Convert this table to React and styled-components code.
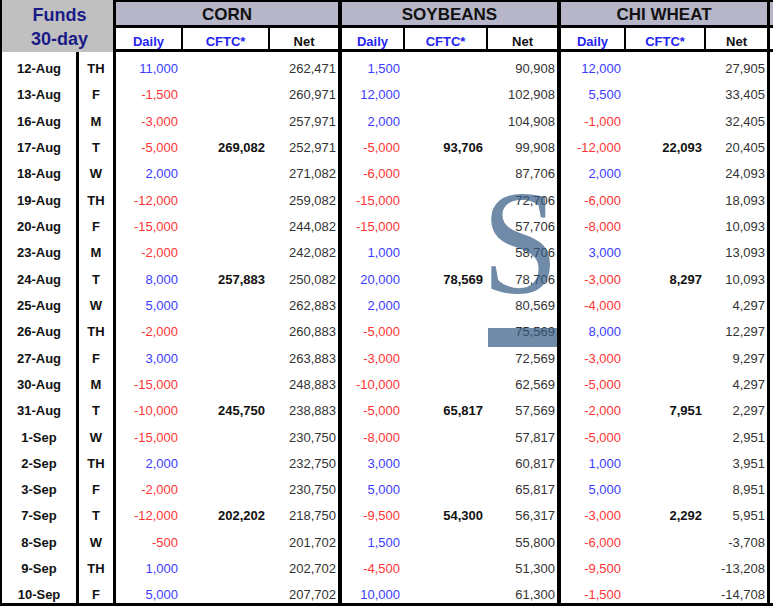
import React from "react";
import styled, { createGlobalStyle } from "styled-components";

const GlobalStyle = createGlobalStyle`
  html, body {
    margin: 0;
    padding: 0;
    background: #fff;
  }
  body {
    font-family: "Liberation Sans", Arial, sans-serif;
    overflow: hidden;
  }
`;

const ROW_H = 26.32;

// date, day, [daily, cftc, net] for corn / soybeans / chi wheat
const rows = [
  ["12-Aug", "TH", ["11,000", "", "262,471"], ["1,500", "", "90,908"], ["12,000", "", "27,905"]],
  ["13-Aug", "F", ["-1,500", "", "260,971"], ["12,000", "", "102,908"], ["5,500", "", "33,405"]],
  ["16-Aug", "M", ["-3,000", "", "257,971"], ["2,000", "", "104,908"], ["-1,000", "", "32,405"]],
  ["17-Aug", "T", ["-5,000", "269,082", "252,971"], ["-5,000", "93,706", "99,908"], ["-12,000", "22,093", "20,405"]],
  ["18-Aug", "W", ["2,000", "", "271,082"], ["-6,000", "", "87,706"], ["2,000", "", "24,093"]],
  ["19-Aug", "TH", ["-12,000", "", "259,082"], ["-15,000", "", "72,706"], ["-6,000", "", "18,093"]],
  ["20-Aug", "F", ["-15,000", "", "244,082"], ["-15,000", "", "57,706"], ["-8,000", "", "10,093"]],
  ["23-Aug", "M", ["-2,000", "", "242,082"], ["1,000", "", "58,706"], ["3,000", "", "13,093"]],
  ["24-Aug", "T", ["8,000", "257,883", "250,082"], ["20,000", "78,569", "78,706"], ["-3,000", "8,297", "10,093"]],
  ["25-Aug", "W", ["5,000", "", "262,883"], ["2,000", "", "80,569"], ["-4,000", "", "4,297"]],
  ["26-Aug", "TH", ["-2,000", "", "260,883"], ["-5,000", "", "75,569"], ["8,000", "", "12,297"]],
  ["27-Aug", "F", ["3,000", "", "263,883"], ["-3,000", "", "72,569"], ["-3,000", "", "9,297"]],
  ["30-Aug", "M", ["-15,000", "", "248,883"], ["-10,000", "", "62,569"], ["-5,000", "", "4,297"]],
  ["31-Aug", "T", ["-10,000", "245,750", "238,883"], ["-5,000", "65,817", "57,569"], ["-2,000", "7,951", "2,297"]],
  ["1-Sep", "W", ["-15,000", "", "230,750"], ["-8,000", "", "57,817"], ["-5,000", "", "2,951"]],
  ["2-Sep", "TH", ["2,000", "", "232,750"], ["3,000", "", "60,817"], ["1,000", "", "3,951"]],
  ["3-Sep", "F", ["-2,000", "", "230,750"], ["5,000", "", "65,817"], ["5,000", "", "8,951"]],
  ["7-Sep", "T", ["-12,000", "202,202", "218,750"], ["-9,500", "54,300", "56,317"], ["-3,000", "2,292", "5,951"]],
  ["8-Sep", "W", ["-500", "", "201,702"], ["1,500", "", "55,800"], ["-6,000", "", "-3,708"]],
  ["9-Sep", "TH", ["1,000", "", "202,702"], ["-4,500", "", "51,300"], ["-9,500", "", "-13,208"]],
  ["10-Sep", "F", ["5,000", "", "207,702"], ["10,000", "", "61,300"], ["-1,500", "", "-14,708"]],
];

const groups = [
  { title: "CORN", edge: 3, cols: [67, 87, 68], pads: [5, 5, 2] },
  { title: "SOYBEANS", edge: 4, cols: [63, 83, 69], pads: [5, 5, 2] },
  { title: "CHI WHEAT", edge: 4, cols: [65, 80, 61], pads: [5, 4, 2] },
];

const Table = () => {
  return (
    <Sheet>
      <LeftBlock>
        <FundsHead>
          Funds
          <br />
          30-day
        </FundsHead>
        <LeftBody>
          <DateCol>
            {rows.map((r) => (
              <LabelCell key={r[0]}>{r[0]}</LabelCell>
            ))}
          </DateCol>
          <DayCol>
            {rows.map((r) => (
              <LabelCell key={r[0]}>{r[1]}</LabelCell>
            ))}
          </DayCol>
        </LeftBody>
      </LeftBlock>

      {groups.map((g, gi) => (
        <Group key={g.title} $edge={g.edge} $cols={g.cols}>
          <Title>{g.title}</Title>
          <SubHead $cols={g.cols}>
            <HeadCell $blue>Daily</HeadCell>
            <HeadCell $blue>CFTC*</HeadCell>
            <HeadCell>Net</HeadCell>
          </SubHead>
          <Body>
            {rows.map((r) => {
              const [daily, cftc, net] = r[gi + 2];
              return (
                <DataRow key={r[0]} $cols={g.cols}>
                  <Value $pad={g.pads[0]} $tone={daily.startsWith("-") ? "neg" : "pos"}>
                    {daily}
                  </Value>
                  <Value $pad={g.pads[1]} $tone="cftc">
                    {cftc}
                  </Value>
                  <Value $pad={g.pads[2]} $tone="net">
                    {net}
                  </Value>
                </DataRow>
              );
            })}
          </Body>
        </Group>
      ))}

      {/* next commodity, cut off at the right edge */}
      <Group $edge={3} $cols={[66, 80, 64]}>
        <Title />
        <SubHead $cols={[66, 80, 64]}>
          <HeadCell />
          <HeadCell />
          <HeadCell />
        </SubHead>
      </Group>

      <Mark>S</Mark>
      <MarkBar />
    </Sheet>
  );
};

const App = () => (
  <>
    <GlobalStyle />
    <Table />
  </>
);

const Sheet = styled.main`
  position: relative;
  display: flex;
  width: 773px;
  height: 606px;
  box-sizing: border-box;
  border-bottom: 3px solid #000;
  overflow: hidden;
  background: #fff;
`;

const LeftBlock = styled.section`
  flex-shrink: 0;
  width: 113px;
  box-sizing: border-box;
  border-left: 2px solid #000;
  display: flex;
  flex-direction: column;
`;

const FundsHead = styled.div`
  flex-shrink: 0;
  height: 52px;
  box-sizing: border-box;
  padding: 3px 0 0 4px;
  background: #c0c0c0;
  color: #1b1b88;
  font-size: 18px;
  font-weight: 700;
  line-height: 24px;
  text-align: center;
`;

const LeftBody = styled.div`
  display: flex;
  flex: 1 0 auto;
`;

const DateCol = styled.div`
  width: 77px;
  box-sizing: border-box;
  border-right: 3px solid #000;
  padding-top: 3.5px;
`;

const DayCol = styled.div`
  flex: 1;
  padding-top: 3.5px;
`;

const LabelCell = styled.div`
  height: ${ROW_H}px;
  display: flex;
  align-items: center;
  justify-content: center;
  font-size: 13px;
  font-weight: 700;
  color: #111;
`;

const Group = styled.section`
  flex-shrink: 0;
  width: ${(p) => p.$edge + p.$cols.reduce((a, b) => a + b, 0)}px;
  box-sizing: border-box;
  border-left: ${(p) => p.$edge}px solid #000;
  display: flex;
  flex-direction: column;
`;

const Title = styled.div`
  flex-shrink: 0;
  height: 28px;
  box-sizing: border-box;
  border-top: 2px solid #000;
  border-bottom: 3px solid #000;
  padding-top: 2px;
  background: #b6b6c8;
  display: flex;
  align-items: center;
  justify-content: center;
  font-size: 17px;
  font-weight: 700;
  color: #111;
`;

const SubHead = styled.div`
  flex-shrink: 0;
  display: grid;
  grid-template-columns: ${(p) => p.$cols.map((c) => `${c}px`).join(" ")};
  height: 24px;
  box-sizing: border-box;
  border-bottom: 3px solid #000;
`;

const HeadCell = styled.div`
  display: flex;
  align-items: flex-end;
  justify-content: center;
  padding-bottom: 1px;
  border-right: 2px solid #000;
  font-size: 13px;
  font-weight: 700;
  line-height: 1;
  color: ${(p) => (p.$blue ? "#2424f2" : "#111")};
  &:last-child {
    border-right: none;
  }
`;

const Body = styled.div`
  flex-shrink: 0;
  padding-top: 3.5px;
`;

const DataRow = styled.div`
  display: grid;
  grid-template-columns: ${(p) => p.$cols.map((c) => `${c}px`).join(" ")};
  height: ${ROW_H}px;
  align-items: center;
`;

const toneColor = {
  pos: "#3c3cff",
  neg: "#ff3434",
  cftc: "#111",
  net: "#333",
};

const Value = styled.span`
  text-align: right;
  padding-right: ${(p) => p.$pad}px;
  font-size: 13px;
  font-weight: ${(p) => (p.$tone === "cftc" ? 700 : 400)};
  color: ${(p) => toneColor[p.$tone]};
  white-space: nowrap;
`;

const Mark = styled.div`
  position: absolute;
  left: 482px;
  top: 169px;
  font-family: "Liberation Serif", "Times New Roman", serif;
  font-size: 148px;
  line-height: 1;
  color: rgba(50, 90, 130, 0.7);
  transform: scaleX(0.93);
  transform-origin: left top;
  pointer-events: none;
`;

const MarkBar = styled.div`
  position: absolute;
  left: 488px;
  top: 328px;
  width: 69px;
  height: 19px;
  background: rgba(50, 90, 130, 0.7);
  pointer-events: none;
`;

export default App;
